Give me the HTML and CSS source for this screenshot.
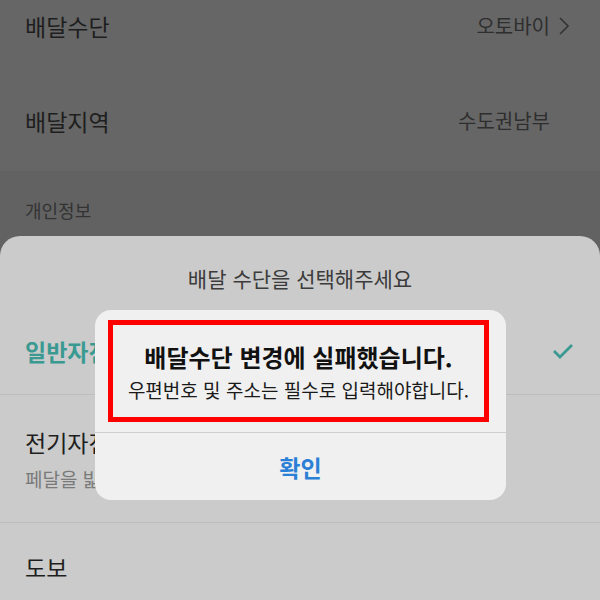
FILE: index.html
```html
<!DOCTYPE html>
<html lang="ko">
<head>
<meta charset="UTF-8" />
<meta name="viewport" content="width=device-width, initial-scale=1" />
<title>배달수단 변경</title>
<link rel="stylesheet" href="styles.css">
</head>
<body>

<div class="screen">
  <!-- Settings list behind the dim layer -->
  <div class="settings">
    <div class="row">
      <span class="row-label">배달수단</span>
      <span class="row-value">오토바이
        <svg class="chev" width="12" height="20" viewBox="0 0 12 20"><path d="M2 2 L10 10 L2 18" fill="none" stroke="currentColor" stroke-width="1.6"/></svg>
      </span>
    </div>
    <div class="row">
      <span class="row-label">배달지역</span>
      <span class="row-value pad-right">수도권남부</span>
    </div>
    <div class="section">
      <span class="section-title">개인정보</span>
    </div>
  </div>

  <!-- Bottom sheet -->
  <div class="sheet">
    <div class="sheet-title">배달 수단을 선택해주세요</div>
    <div class="option selected">
      <span>일반자전거</span>
      <svg width="24" height="18" viewBox="0 0 24 18"><path d="M3 9 L9 15 L21 3" fill="none" stroke="currentColor" stroke-width="2.8"/></svg>
    </div>
    <div class="option with-desc">
      <span>전기자전거</span>
      <span class="desc">페달을 밟아야 움직이는 전기자전거</span>
    </div>
    <div class="option">
      <span>도보</span>
    </div>
  </div>

  <!-- Alert dialog, sits over the sheet -->
  <div class="alert" role="alertdialog">
    <div class="alert-body">
      <div class="alert-title">배달수단 변경에 실패했습니다.</div>
      <div class="alert-msg">우편번호 및 주소는 필수로 입력해야합니다.</div>
    </div>
    <button class="alert-btn">확인</button>
  </div>
</div>

</body>
</html>
```

FILE: styles.css
```css
* {
  box-sizing: border-box;
}

html, body {
  margin: 0;
  padding: 0;
  font-family: "Noto Sans CJK KR", "Noto Sans", sans-serif;
}

.screen {
  position: relative;
  width: 600px;
  height: 600px;
  overflow: hidden;
  background: #626262;
}

/* Settings list (dimmed) */
.settings {
  display: flex;
  flex-direction: column;
}

.row {
  height: 95px;
  display: flex;
  align-items: center;
  justify-content: space-between;
  padding: 0 30px 6px 25px;
  background: #666666;
  margin-top: -19px;
}

.row + .row {
  margin-top: 0;
}

.row-label {
  font-size: 23px;
  color: #1e1e1e;
}

.row-value {
  font-size: 20px;
  color: #2e2e2e;
  display: flex;
  align-items: center;
  gap: 8px;
}

.row-value.pad-right {
  padding-right: 20px;
}

.chev {
  color: #333;
}

.section {
  background: #626262;
  padding: 26px 25px 20px;
}

.section-title {
  font-size: 18px;
  color: #333;
}

/* Bottom sheet */
.sheet {
  position: absolute;
  left: 0;
  right: 0;
  top: 236px;
  bottom: 0;
  background: #cbcbcb;
  border-radius: 20px 20px 0 0;
  display: flex;
  flex-direction: column;
}

.sheet-title {
  flex-shrink: 0;
  text-align: center;
  font-size: 21px;
  line-height: 30px;
  color: #3c3c3c;
  padding: 27px 0 15px;
}

.option {
  flex-shrink: 0;
  display: flex;
  align-items: center;
  justify-content: space-between;
  padding: 0 25px;
  font-size: 23px;
  color: #1e1e1e;
  border-bottom: 1px solid #bdbdbd;
  height: 87px;
}

.option.selected {
  color: #3a9a92;
  font-weight: 700;
}

.option.with-desc {
  flex-direction: column;
  align-items: flex-start;
  justify-content: center;
  height: 128px;
  gap: 6px;
}

.desc {
  font-size: 19px;
  color: #7a7a7a;
}

.option:last-child {
  border-bottom: none;
}

/* Alert */
.alert {
  position: absolute;
  left: 95px;
  top: 310px;
  width: 411px;
  height: 190px;
  background: #f0f0f0;
  border-radius: 16px;
  display: flex;
  flex-direction: column;
  padding-top: 10px;
}

.alert-body {
  margin: 0 17px 0 13px;
  border: 5px solid #ff0000;
  height: 102px;
  display: flex;
  flex-direction: column;
  align-items: center;
  justify-content: center;
  gap: 2px;
}

.alert-title {
  font-size: 24px;
  font-weight: 700;
  color: #111;
}

.alert-msg {
  font-size: 19px;
  color: #1a1a1a;
}

.alert-btn {
  margin-top: 10px;
  border: none;
  border-top: 1px solid #cfcfcf;
  background: transparent;
  flex: 1;
  font-family: inherit;
  font-size: 23px;
  font-weight: 700;
  color: #2a7fd6;
}
```
